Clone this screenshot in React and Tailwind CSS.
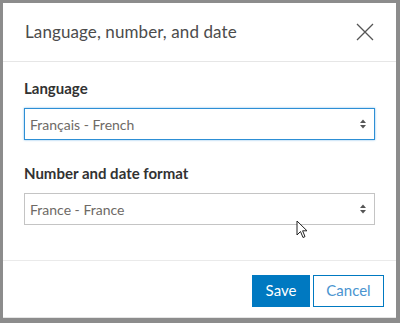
import React from "react";

const Chevrons = () => (
  <svg width="8" height="12" viewBox="0 0 8 12" className="shrink-0">
    <path d="M4 1.5 L7 5 L1 5 Z" fill="#555" />
    <path d="M4 10.5 L7 7 L1 7 Z" fill="#555" />
  </svg>
);

export default function App() {
  return (
    <div className="w-[400px] h-[323px] bg-[#8c8c8c] pt-[3px] pl-[3px] pr-[4px] pb-[5px]" style={{ fontFamily: "Lato, 'Open Sans', sans-serif" }}>
      <div className="relative w-full h-full bg-white flex flex-col border-b-[1px] border-[#e5e5e5]">
        <div className="h-[59px] flex items-center justify-between pl-[22px] pr-[22px] border-b border-[#e6e6e6]">
          <span className="text-[17px] text-[#4c4c4c] tracking-[0.1px]">Language, number, and date</span>
          <svg width="18" height="18" viewBox="0 0 18 18">
            <path d="M1 1 L17 17 M17 1 L1 17" stroke="#555" strokeWidth="1.3" />
          </svg>
        </div>
        <div className="flex-1 px-[21px] pt-[16px] flex flex-col">
          <label className="text-[15px] font-bold text-[#323232] leading-[20px]">Language</label>
          <div className="mt-[10px] h-[32px] border border-[#2d8fd5] shadow-[0_0_2px_#7dbbe8] flex items-center justify-between pl-[5px] pr-[7px]">
            <span className="text-[14px] text-[#6e6a66]">Français - French</span>
            <Chevrons />
          </div>
          <label className="mt-[23px] text-[15px] font-bold text-[#323232] leading-[20px]">Number and date format</label>
          <div className="mt-[10px] h-[32px] border border-[#c4c4c4] flex items-center justify-between pl-[5px] pr-[7px]">
            <span className="text-[14px] text-[#6e6a66]">France - France</span>
            <Chevrons />
          </div>
        </div>
        <div className="h-[57px] border-t border-[#eaeaea] flex items-center justify-end pr-[12px] gap-[3px] pt-[3px]">
          <button className="w-[58px] h-[32px] bg-[#0079c1] text-white text-[15px]">Save</button>
          <button className="w-[71px] h-[32px] border border-[#0079c1] text-[#4a94d0] text-[15px] bg-white">Cancel</button>
        </div>
        <svg className="absolute left-[293px] top-[217px]" width="12" height="19" viewBox="0 0 12 19">
          <path d="M1 1 L1 15 L4.5 11.5 L7 17.5 L9 16.6 L6.6 10.8 L11 10.8 Z" fill="white" stroke="#222" strokeWidth="1" strokeLinejoin="round" />
        </svg>
      </div>
    </div>
  );
}
